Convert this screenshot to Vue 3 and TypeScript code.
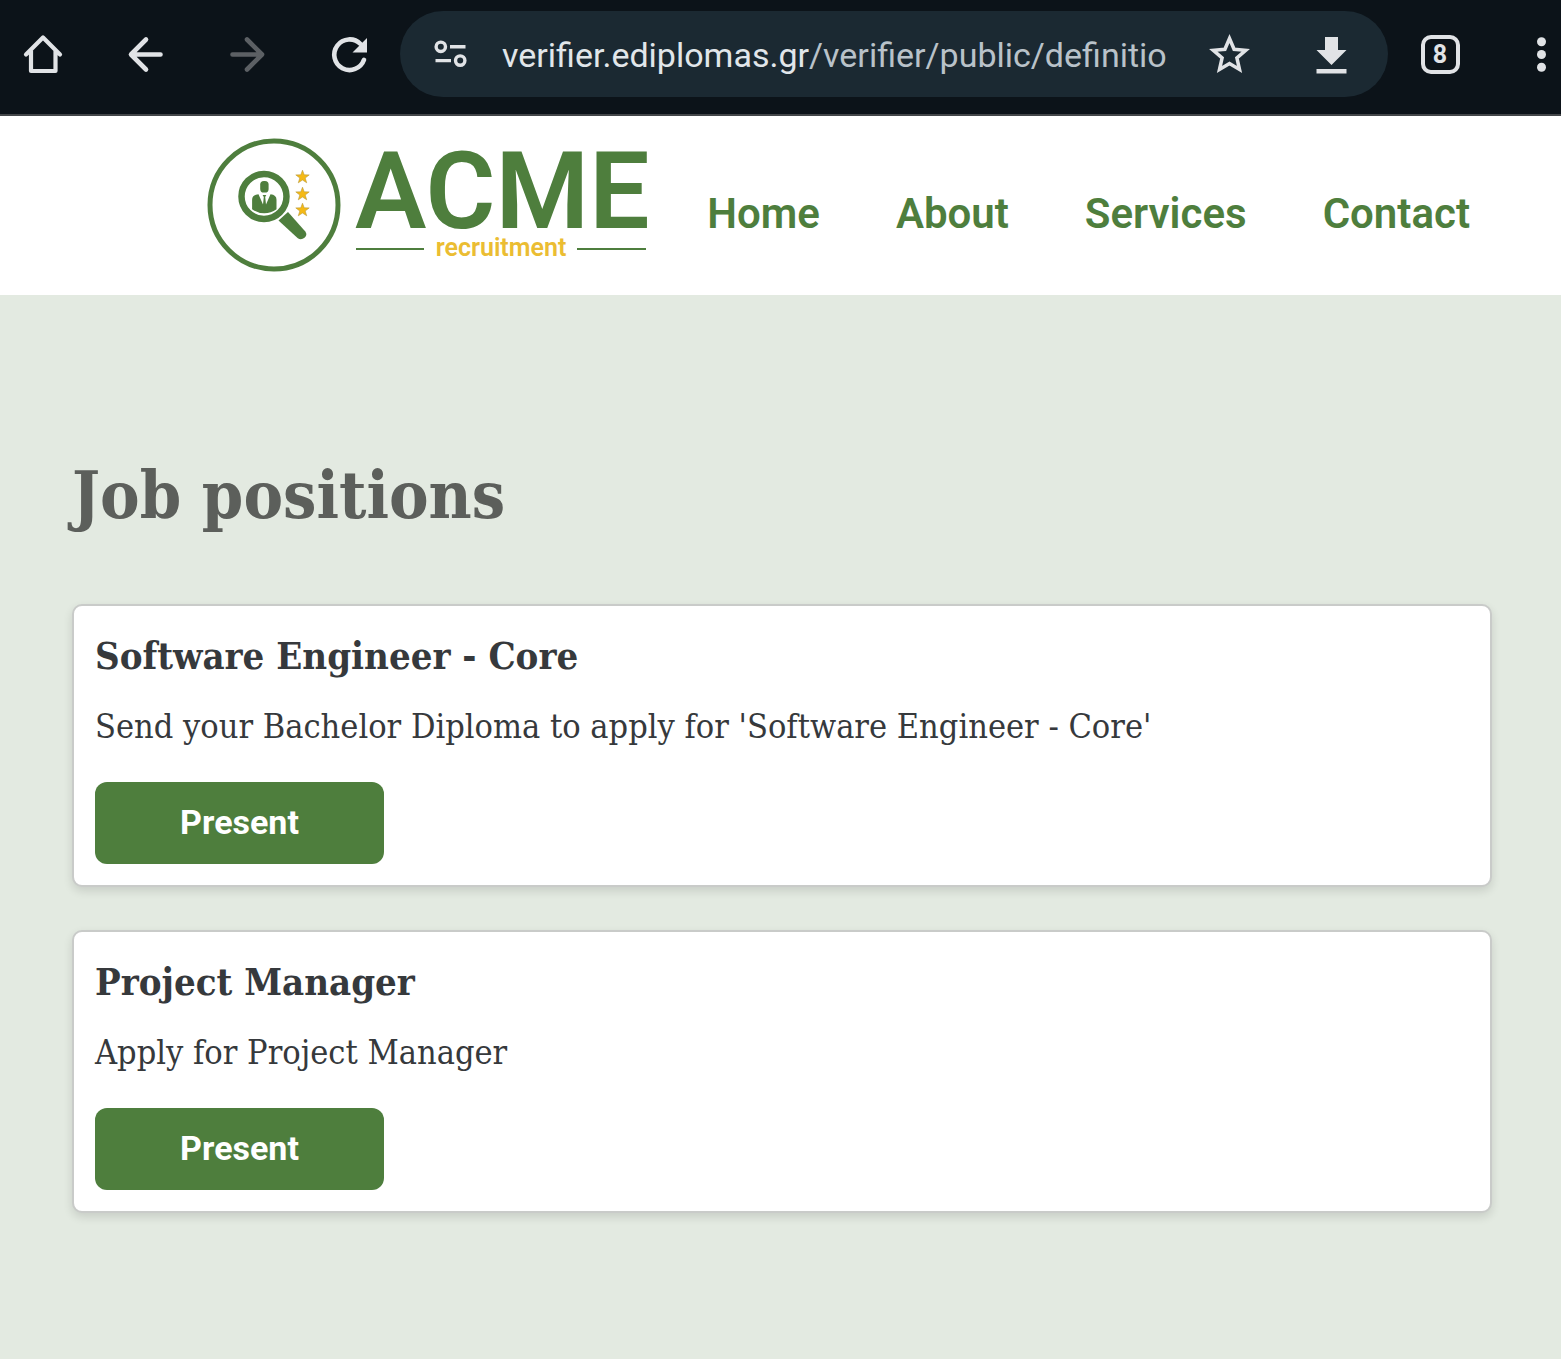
<script setup lang="ts">
interface Position {
  title: string
  description: string
}

const links: string[] = ['Home', 'About', 'Services', 'Contact']

const positions: Position[] = [
  {
    title: 'Software Engineer - Core',
    description: "Send your Bachelor Diploma to apply for 'Software Engineer - Core'",
  },
  { title: 'Project Manager', description: 'Apply for Project Manager' },
]

const stars: number[] = [39, 56, 72]
</script>

<template>
  <div class="page">
    <div class="toolbar">
      <div class="nav-buttons">
        <button type="button" class="icon-button" aria-label="Home page">
          <svg viewBox="0 0 44 44" class="stroke">
            <path d="M5 22.500 22 5.500l17 17M10 19v20h24.500V19" stroke-width="4.200" stroke-linejoin="round" />
          </svg>
        </button>
        <button type="button" class="icon-button" aria-label="Back">
          <svg viewBox="0 0 44 44" class="stroke"><path d="M37.500 22.500H8.500M23 7.500 8 22.500l15 15" stroke-linejoin="round" /></svg>
        </button>
        <button type="button" class="icon-button dim" aria-label="Forward" disabled>
          <svg viewBox="0 0 44 44" class="stroke"><path d="M7.500 22.500H36M22 7.500l15 15-15 15" stroke-linejoin="round" /></svg>
        </button>
        <button type="button" class="icon-button" aria-label="Reload">
          <svg viewBox="0 0 44 44" class="stroke">
            <path d="M37 27.800A15.300 15.300 0 1 1 33.500 12" />
            <path d="M40 6v14.500H25.500z" class="solid" />
          </svg>
        </button>
      </div>
      <div class="address">
        <button type="button" class="icon-button" aria-label="Site settings">
          <svg viewBox="0 0 44 44" class="stroke">
            <g stroke-width="3.400" stroke-linecap="butt">
              <circle cx="12.800" cy="14.800" r="4.700" />
              <circle cx="32.200" cy="28.600" r="4.700" />
              <path d="M22 14.800h15.500M7.500 28.600H23" />
            </g>
          </svg>
        </button>
        <button type="button" class="url"><span class="host">verifier.ediplomas.gr</span>/verifier/public/definitio</button>
        <button type="button" class="icon-button" aria-label="Bookmark">
          <svg viewBox="0 0 44 44" class="stroke">
            <path
              d="m21.500 6.500 4.600 10.800 11.600 1-8.800 7.700 2.600 11.500-10-6-10 6 2.600-11.500-8.800-7.700 11.600-1z"
              stroke-width="3.500"
              stroke-linejoin="miter"
            />
          </svg>
        </button>
        <button type="button" class="icon-button" aria-label="Downloads">
          <svg viewBox="0 0 44 44" class="fill">
            <path d="M15 5h13v13h8.500l-15 15-15-15H15zM6.500 37h30v4.500h-30z" />
          </svg>
        </button>
      </div>
      <button type="button" class="icon-button tabs" aria-label="8 open tabs"><span>8</span></button>
      <button type="button" class="icon-button more" aria-label="Menu">
        <svg viewBox="0 0 44 44" class="fill">
          <circle cx="22.500" cy="9.700" r="4.500" />
          <circle cx="22.500" cy="22.500" r="4.500" />
          <circle cx="22.500" cy="35.200" r="4.500" />
        </svg>
      </button>
    </div>

    <header class="header">
      <a href="#" class="logo">
        <svg viewBox="0 0 440 134" class="logo-art" role="img" aria-label="ACME recruitment">
          <g fill="#4e7e3d">
            <circle cx="67" cy="67" r="64" fill="none" stroke="#4e7e3d" stroke-width="5" />
            <circle cx="57" cy="58.500" r="22.500" fill="none" stroke="#4e7e3d" stroke-width="6.500" />
            <path d="m71.500 82.500 9.500-8.500 17.300 19.500q2.500 3.500-.800 6.300-3.500 2.700-7 .2z" />
            <rect x="53.200" y="43" width="8.400" height="11.500" rx="3.600" />
            <path d="M51.500 56.300 56 66.500 56.800 59l-1.200-2h3.700L58.200 59l.8 7.500 4.500-10.200q6 .7 6 5.500v9.500q-5.500 4-12.200 4t-12.200-4v-9.500q0-4.800 6.400-5.500z" />
          </g>
          <path
            v-for="y in stars"
            :key="y"
            :transform="`translate(95.5 ${y})`"
            d="m0-6.800 1.700 4.600 5 .1-4 3.100 1.500 4.800L0 3-4.200 5.800-2.700 1l-4-3.100 5-.1z"
            fill="#f5b915"
            stroke="#b99a3c"
            stroke-width=".6"
          />
          <text x="148" y="90" class="logo-name">ACME</text>
          <path d="M149 111h68M370 111h69" stroke="#4e7e3d" stroke-width="2" />
          <text x="294" y="118" class="logo-tag">recruitment</text>
        </svg>
      </a>
      <nav class="menu">
        <a v-for="link in links" :key="link" href="#">{{ link }}</a>
      </nav>
    </header>

    <main class="content">
      <h1>Job positions</h1>
      <article v-for="position in positions" :key="position.title" class="card">
        <h2>{{ position.title }}</h2>
        <p>{{ position.description }}</p>
        <button type="button" class="present">Present</button>
      </article>
    </main>
  </div>
</template>

<style>
body {
  margin: 0;
  background: #e3eae1;
}
</style>

<style scoped>
.page {
  font-family: Roboto, "Liberation Sans", sans-serif;
  color: #36393c;
}
button {
  border: 0;
  padding: 0;
  background: none;
  color: inherit;
  font-family: inherit;
}
.toolbar {
  display: flex;
  align-items: center;
  box-sizing: border-box;
  height: 116px;
  padding: 0 4px 6px 21px;
  border-bottom: 2px solid #434649;
  background: #0c1319;
  color: #e1e3e6;
}
.nav-buttons {
  display: flex;
  gap: 58px;
  margin-right: 29px;
}
.icon-button {
  display: flex;
  flex: none;
  align-items: center;
  justify-content: center;
  width: 44px;
  height: 44px;
}
.icon-button svg {
  flex: none;
  width: 44px;
  height: 44px;
}
.stroke {
  fill: none;
  stroke: currentColor;
  stroke-width: 4.6;
  stroke-linecap: round;
}
.fill,
.solid {
  fill: currentColor;
  stroke: none;
}
.dim {
  color: #5c6064;
}
.address {
  display: flex;
  flex: 1;
  align-items: center;
  min-width: 0;
  height: 86px;
  box-sizing: border-box;
  padding: 0 34px 0 28px;
  border-radius: 43px;
  background: #1b2932;
}
.url {
  flex: 1;
  min-width: 0;
  margin: 0 32px 0 30px;
  padding-top: 2px;
  overflow: hidden;
  color: #b9c2c9;
  font-size: 34px;
  line-height: 44px;
  text-align: left;
  white-space: nowrap;
}
.host {
  color: #e1e6ea;
}
.address .icon-button:last-child {
  margin-left: 58px;
}
.tabs {
  margin: 0 63px 0 30px;
}
.tabs span {
  box-sizing: border-box;
  width: 39px;
  height: 39px;
  border: 4px solid currentColor;
  border-radius: 10px;
  font-size: 25px;
  font-weight: 700;
  line-height: 31px;
}
.more {
  width: 32px;
}
.header {
  display: flex;
  align-items: center;
  justify-content: flex-end;
  gap: 60px;
  box-sizing: border-box;
  height: 179px;
  padding: 0 91px 2px 0;
  background: #fff;
}
.logo-art {
  display: block;
  width: 440px;
  height: 134px;
  overflow: visible;
}
.logo-name {
  fill: #4e7e3d;
  font-size: 107px;
  font-weight: 600;
}
.logo-tag {
  fill: #ebbd32;
  font-size: 25px;
  font-weight: 600;
  text-anchor: middle;
}
.menu {
  display: flex;
  gap: 76px;
  padding-top: 18px;
}
.menu a {
  color: #4e7e3d;
  font-size: 42px;
  font-weight: 600;
  line-height: 52px;
  text-decoration: none;
}
.content {
  padding: 156px 69px 102px 72px;
}
h1,
h2,
p {
  margin: 0;
  font-family: "Roboto Slab", "DejaVu Serif Condensed", "DejaVu Serif", serif;
}
h1 {
  margin-bottom: 65px;
  color: #5c5f5b;
  font-size: 66px;
  line-height: 88px;
}
.card {
  padding: 21px;
  border: 2px solid #c9cbc9;
  border-radius: 10px;
  background: #fff;
  box-shadow: 0 4px 10px rgb(0 0 0 / 12%);
}
.card + .card {
  margin-top: 43px;
}
h2 {
  margin-bottom: 18px;
  font-size: 38px;
  line-height: 57px;
}
p {
  margin-bottom: 32px;
  font-size: 34px;
  line-height: 48px;
}
.present {
  display: block;
  width: 289px;
  height: 82px;
  padding-bottom: 2px;
  border-radius: 12px;
  background: #4e7e3d;
  color: #fff;
  font-size: 34px;
  font-weight: 700;
}
</style>
